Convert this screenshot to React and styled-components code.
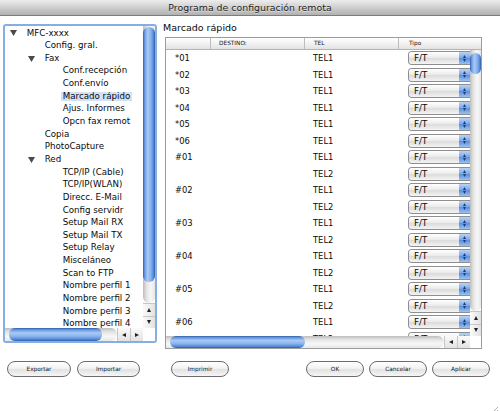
import React from "react";
import styled, { createGlobalStyle } from "styled-components";

const GlobalStyle = createGlobalStyle`
  body {
    margin: 0;
    background: #fff;
    font-family: "DejaVu Sans", "Liberation Sans", sans-serif;
  }
`;

const Window = styled.div`
  position: relative;
  width: 500px;
  height: 411px;
  background: #fff;
  overflow: hidden;
  font-family: "DejaVu Sans", "Liberation Sans", sans-serif;
`;

const TitleBar = styled.div`
  box-sizing: border-box;
  height: 16px;
  border-bottom: 1px solid #7c7c7c;
  background: linear-gradient(#ededed, #d2d2d2 45%, #c2c2c2 70%, #b2b2b2);
  color: #1e1e1e;
  font-size: 9.4px;
  line-height: 15px;
  text-align: center;
  text-shadow: 0 1px 0 rgba(255, 255, 255, 0.5);
`;

const Content = styled.div`
  padding-top: 8px;
`;

const MainRow = styled.div`
  display: flex;
  align-items: flex-start;
`;

const LeftPanel = styled.div`
  box-sizing: border-box;
  width: 154px;
  height: 319px;
  margin-left: 3px;
  border: 2px solid #87aee3;
  border-radius: 3px;
  display: grid;
  grid-template-columns: 1fr 12px;
  grid-template-rows: 1fr 13px;
  overflow: hidden;
`;

const TreeArea = styled.div`
  overflow: hidden;
  padding-top: 1px;
`;

const TreeRow = styled.div`
  display: flex;
  align-items: center;
  height: 12.65px;
  padding-left: ${(p) => 5 + p.$level * 18}px;
  font-size: 8.7px;
  color: #0a0a0a;
  white-space: nowrap;
`;

const ToggleSlot = styled.span`
  flex: none;
  width: 16.7px;
  display: flex;
  align-items: center;
`;

const TreeLabel = styled.span`
  display: inline-block;
  line-height: 9.5px;
  ${(p) =>
    p.$selected &&
    `
    background: #d1e1f7;
    margin-left: -1.7px;
    padding: 0 1.7px;
  `}
`;

const VScroll = styled.div`
  display: flex;
  flex-direction: column;
  background: #fff;
`;

const VTrack = styled.div`
  flex: 1;
  position: relative;
  border-radius: 0 0 6px 6px;
  background: linear-gradient(to right, #bdbdbd, #e4e4e4 30%, #f7f7f7 65%, #e6e6e6);
`;

const VThumb = styled.div`
  position: absolute;
  left: 0;
  right: 0;
  top: ${(p) => p.$top}px;
  height: ${(p) => p.$size}px;
  border-radius: 6px;
  background: linear-gradient(
    to right,
    #2f5eab 0%,
    #6a9be3 15%,
    #a8c9f5 38%,
    #8cb6ee 62%,
    #5a8ddb 85%,
    #2f5eab 100%
  );
`;

const HScroll = styled.div`
  display: flex;
  background: #fff;
`;

const HTrack = styled.div`
  flex: 1;
  position: relative;
  border-radius: 0 6px 6px 0;
  background: linear-gradient(#bdbdbd, #e4e4e4 30%, #f7f7f7 65%, #e6e6e6);
`;

const HThumb = styled.div`
  position: absolute;
  top: 0;
  bottom: 0;
  left: ${(p) => p.$left}px;
  width: ${(p) => p.$size}px;
  border-radius: 6px;
  background: linear-gradient(
    #2f5eab 0%,
    #6a9be3 15%,
    #a8c9f5 38%,
    #8cb6ee 62%,
    #5a8ddb 85%,
    #2f5eab 100%
  );
`;

const ArrowBtn = styled.div`
  flex: none;
  width: ${(p) => (p.$horizontal ? "12px" : "auto")};
  height: ${(p) => (p.$horizontal ? "auto" : "11.5px")};
  display: flex;
  align-items: center;
  justify-content: center;
  background: linear-gradient(${(p) => (p.$horizontal ? "#fafafa, #e2e2e2" : "to right, #fafafa, #e2e2e2")});
  border-${(p) => (p.$horizontal ? "left" : "top")}: 1px solid #c6c6c6;
`;

const Corner = styled.div`
  background: #fff;
`;

const RightColumn = styled.div`
  margin-left: 5px;
  margin-top: -2px;
  display: flex;
  flex-direction: column;
`;

const SectionLabel = styled.div`
  font-size: 9.5px;
  line-height: 12px;
  padding-left: 1px;
  margin-bottom: 3px;
  color: #0a0a0a;
`;

const TableBox = styled.div`
  box-sizing: border-box;
  margin-left: 3px;
  width: 317px;
  height: 312px;
  border: 1px solid #9c9c9c;
  display: grid;
  grid-template-columns: 1fr 11px;
  grid-template-rows: 12px 1fr 12px;
  overflow: hidden;
`;

const HeaderRow = styled.div`
  grid-column: 1 / -1;
  display: grid;
  grid-template-columns: 44px 94px 94px 1fr;
  border-bottom: 1px solid #b4b4b4;
  background: linear-gradient(#ffffff, #f2f2f2 50%, #e2e2e2);
`;

const HeaderCell = styled.div`
  border-left: ${(p) => (p.$first ? "none" : "1px solid #bdbdbd")};
  padding-left: ${(p) => p.$pad}px;
  font-size: 5.8px;
  line-height: 11px;
  color: #111;
  white-space: nowrap;
`;

const RowsArea = styled.div`
  overflow: hidden;
`;

const DataRow = styled.div`
  display: grid;
  grid-template-columns: 44px 94px 94px 1fr;
  align-items: center;
  height: 16.5px;
`;

const Cell = styled.div`
  padding-left: 9px;
  font-size: 8.4px;
  color: #0a0a0a;
  white-space: nowrap;
`;

const PopUp = styled.div`
  box-sizing: border-box;
  margin-left: 10px;
  width: 62px;
  height: 14px;
  display: flex;
  border: 1px solid #8e8e8e;
  border-right: none;
  border-radius: 4px 0 0 4px;
  overflow: hidden;
  box-shadow: inset 0 -1px 0 #b8b8b8;
`;

const PopUpText = styled.div`
  flex: 1;
  padding-left: 5px;
  font-size: 8.7px;
  line-height: 12px;
  color: #0a0a0a;
  background: linear-gradient(#ffffff, #ececec 45%, #dcdcdc 55%, #f4f4f4);
`;

const PopUpArrows = styled.div`
  flex: none;
  width: 11px;
  display: flex;
  flex-direction: column;
  align-items: center;
  justify-content: center;
  gap: 1px;
  background: linear-gradient(#b9d3f5, #7fabea 45%, #5b90dd 55%, #9cc1f2);
`;

const ButtonRow = styled.div`
  display: flex;
  align-items: center;
  margin-top: 12px;
  padding: 0 10px 0 7px;
`;

const ButtonGroup = styled.div`
  display: flex;
  gap: ${(p) => p.$gap}px;
  margin-left: ${(p) => (p.$auto ? "auto" : `${p.$offset || 0}px`)};
`;

const Button = styled.button`
  box-sizing: border-box;
  width: ${(p) => p.$width}px;
  height: 16px;
  padding: 0;
  border: 1px solid #6c6c6c;
  border-radius: 8px;
  background: linear-gradient(#ffffff, #f3f3f3 45%, #e2e2e2 55%, #f6f6f6);
  font-family: "DejaVu Sans", "Liberation Sans", sans-serif;
  font-size: 5.8px;
  color: #222;
`;

const Grip = styled.div`
  position: absolute;
  right: 2px;
  bottom: 2px;
  width: 9px;
  height: 9px;
`;

const Tri = ({ dir, size = 4, color = "#222" }) => {
  const pts = {
    up: `0,${size} ${size},${size} ${size / 2},0`,
    down: `0,0 ${size},0 ${size / 2},${size}`,
    left: `${size},0 ${size},${size} 0,${size / 2}`,
    right: `0,0 0,${size} ${size},${size / 2}`,
  }[dir];
  return (
    <svg width={size} height={size} viewBox={`0 0 ${size} ${size}`} style={{ display: "block" }}>
      <polygon points={pts} fill={color} />
    </svg>
  );
};

const Disclosure = () => (
  <svg width="7" height="6" viewBox="0 0 7 6" style={{ display: "block" }}>
    <polygon points="0,0 7,0 3.5,6" fill="#4a4a4a" />
  </svg>
);

const tree = [
  { level: 0, label: "MFC-xxxx", open: true },
  { level: 1, label: "Config. gral." },
  { level: 1, label: "Fax", open: true },
  { level: 2, label: "Conf.recepción" },
  { level: 2, label: "Conf.envío" },
  { level: 2, label: "Marcado rápido", selected: true },
  { level: 2, label: "Ajus. Informes" },
  { level: 2, label: "Opcn fax remot" },
  { level: 1, label: "Copia" },
  { level: 1, label: "PhotoCapture" },
  { level: 1, label: "Red", open: true },
  { level: 2, label: "TCP/IP (Cable)" },
  { level: 2, label: "TCP/IP(WLAN)" },
  { level: 2, label: "Direcc. E-Mail" },
  { level: 2, label: "Config servidr" },
  { level: 2, label: "Setup Mail RX" },
  { level: 2, label: "Setup Mail TX" },
  { level: 2, label: "Setup Relay" },
  { level: 2, label: "Misceláneo" },
  { level: 2, label: "Scan to FTP" },
  { level: 2, label: "Nombre perfil 1" },
  { level: 2, label: "Nombre perfil 2" },
  { level: 2, label: "Nombre perfil 3" },
  { level: 2, label: "Nombre perfil 4" },
];

const rows = [
  ...["*01", "*02", "*03", "*04", "*05", "*06"].map((c) => ({ code: c, tel: "TEL1" })),
  ...["#01", "#02", "#03", "#04", "#05", "#06"].flatMap((c) => [
    { code: c, tel: "TEL1" },
    { code: "", tel: "TEL2" },
  ]),
];

const VerticalBar = ({ top, size }) => (
  <VScroll>
    <VTrack>
      <VThumb $top={top} $size={size} />
    </VTrack>
    <ArrowBtn>
      <Tri dir="up" />
    </ArrowBtn>
    <ArrowBtn>
      <Tri dir="down" />
    </ArrowBtn>
  </VScroll>
);

const HorizontalBar = ({ left, size }) => (
  <HScroll>
    <HTrack>
      <HThumb $left={left} $size={size} />
    </HTrack>
    <ArrowBtn $horizontal>
      <Tri dir="left" />
    </ArrowBtn>
    <ArrowBtn $horizontal>
      <Tri dir="right" />
    </ArrowBtn>
  </HScroll>
);

export default function App() {
  return (
    <Window>
      <GlobalStyle />
      <TitleBar>Programa de configuración remota</TitleBar>
      <Content>
        <MainRow>
          <LeftPanel>
            <TreeArea>
              {tree.map((item) => (
                <TreeRow key={item.label} $level={item.level}>
                  <ToggleSlot>{item.open && <Disclosure />}</ToggleSlot>
                  <TreeLabel $selected={item.selected}>{item.label}</TreeLabel>
                </TreeRow>
              ))}
            </TreeArea>
            <VerticalBar top={1} size={255} />
            <HorizontalBar left={4} size={93} />
            <Corner />
          </LeftPanel>

          <RightColumn>
            <SectionLabel>Marcado rápido</SectionLabel>
            <TableBox>
              <HeaderRow>
                <HeaderCell $first $pad={8} />
                <HeaderCell $pad={8}>DESTINO:</HeaderCell>
                <HeaderCell $pad={9}>TEL</HeaderCell>
                <HeaderCell $pad={10}>Tipo</HeaderCell>
              </HeaderRow>
              <RowsArea>
                {rows.map((r, i) => (
                  <DataRow key={i}>
                    <Cell>{r.code}</Cell>
                    <Cell />
                    <Cell>{r.tel}</Cell>
                    <PopUp>
                      <PopUpText>F/T</PopUpText>
                      <PopUpArrows>
                        <Tri dir="up" size={3} color="#1f3f74" />
                        <Tri dir="down" size={3} color="#1f3f74" />
                      </PopUpArrows>
                    </PopUp>
                  </DataRow>
                ))}
              </RowsArea>
              <VerticalBar top={3} size={21} />
              <HorizontalBar left={4} size={135} />
              <Corner />
            </TableBox>
          </RightColumn>
        </MainRow>

        <ButtonRow>
          <ButtonGroup $gap={6}>
            <Button $width={64}>Exportar</Button>
            <Button $width={63}>Importar</Button>
          </ButtonGroup>
          <ButtonGroup $offset={31}>
            <Button $width={58}>Imprimir</Button>
          </ButtonGroup>
          <ButtonGroup $auto $gap={5}>
            <Button $width={58}>OK</Button>
            <Button $width={58}>Cancelar</Button>
            <Button $width={58}>Aplicar</Button>
          </ButtonGroup>
        </ButtonRow>
      </Content>
      <Grip>
        <svg width="9" height="9" viewBox="0 0 9 9">
          <line x1="1" y1="9" x2="9" y2="1" stroke="#999" strokeWidth="0.8" />
          <line x1="4" y1="9" x2="9" y2="4" stroke="#999" strokeWidth="0.8" />
          <line x1="7" y1="9" x2="9" y2="7" stroke="#999" strokeWidth="0.8" />
        </svg>
      </Grip>
    </Window>
  );
}
